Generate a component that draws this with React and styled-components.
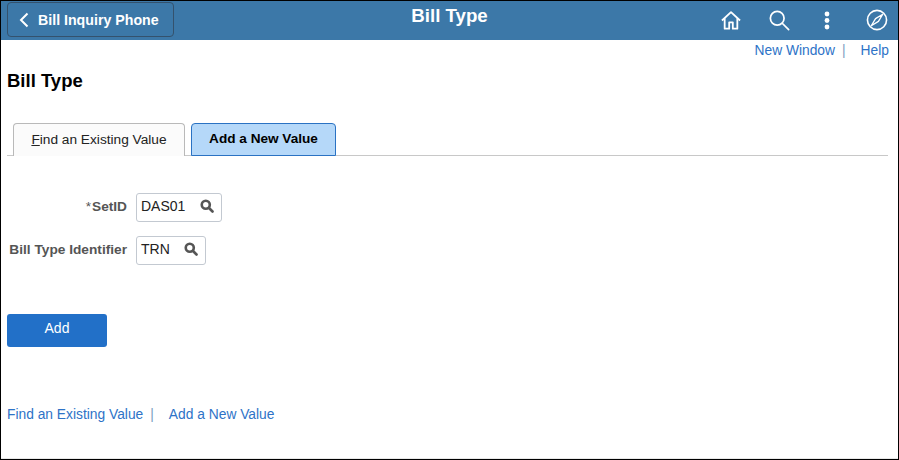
import React from "react";
import styled, { createGlobalStyle } from "styled-components";

const Global = createGlobalStyle`
  html, body { margin: 0; padding: 0; background: #fff; }
  body { font-family: "Liberation Sans", Arial, sans-serif; }
`;
const Frame = styled.div`
  width: 899px; height: 460px; box-sizing: border-box; border: 1px solid #000;
  display: flex; flex-direction: column; overflow: hidden; background: #fff;
  box-shadow: inset 0 -1px 0 #e8e8e8;
`;
const Banner = styled.header`
  height: 38px; flex: none; background: #3c78a8; display: grid;
  grid-template-columns: 1fr auto 1fr; align-items: start; padding: 1px 0 0 6px;
  color: #fff;
`;
const BackButton = styled.button`
  justify-self: start; width: 167px; height: 35px; box-sizing: border-box;
  display: flex; align-items: center; gap: 9px; padding: 0 0 0 11px;
  background: #3c78a8; border: 1px solid #34526d; border-radius: 4px; color: #fff;
  font: bold 14.2px "Liberation Sans", Arial, sans-serif;
`;
const BannerTitle = styled.h1`
  margin: 2px 6px 0 0; font-size: 18.7px; line-height: 24px; font-weight: bold;
`;
const IconBar = styled.nav`
  justify-self: end; display: flex; align-items: center; height: 36px;
`;
const IconSlot = styled.span`
  width: ${p => p.$w || 48}px; margin-left: ${p => p.$ml || 0}px;
  display: flex; justify-content: center; align-items: center;
`;
const Utility = styled.div`
  display: flex; justify-content: flex-end; height: 21px; padding: 3px 9px 0 0; box-sizing: border-box;
  font-size: 13.8px; line-height: 16px;
`;
const Link = styled.a`
  color: #2e73c7; text-decoration: none;
`;
const Pipe = styled.span`
  color: #7d9cc0; margin: ${p => p.$m};
`;
const Content = styled.main`
  padding: 0 10px 0 6px; display: flex; flex-direction: column; flex: 1;
`;
const PageTitle = styled.h2`
  margin: 8px 0 0; font-size: 18.5px; line-height: 24px; font-weight: bold; color: #000;
`;
const Tabs = styled.div`
  display: flex; gap: 6px; margin-top: 30px; padding-left: 6px; height: 32px;
  border-bottom: 1px solid #c8c8c8;
`;
const Tab = styled.div`
  box-sizing: border-box; height: 33px; display: flex; align-items: center; justify-content: center;
  width: ${p => p.$w}px; border-radius: 4px 4px 0 0;
  border: 1px solid ${p => (p.$active ? "#2a72c3" : "#b9b9b9")};
  border-bottom: ${p => (p.$active ? "1px solid #2a72c3" : "none")};
  background: ${p => (p.$active ? "#b5d8f9" : "#fbfbfb")};
  font-weight: ${p => (p.$active ? "bold" : "normal")};
  font-size: ${p => (p.$active ? "13.6px" : "13.7px")};
  color: ${p => (p.$active ? "#000" : "#222")};
  padding-bottom: 2px;
  u { text-underline-offset: 1px; }
`;
const Form = styled.div`
  display: grid; grid-template-columns: 120px auto; column-gap: 9px; row-gap: 14px;
  margin-top: 37px; align-items: center; justify-content: start; justify-items: start;
`;
const Label = styled.label`
  justify-self: end; font-size: 13.7px; font-weight: bold; color: #555; white-space: nowrap;
  margin-bottom: 2px;
`;
const Star = styled.span`
  font-weight: normal; margin-right: 1px;
`;
const Lookup = styled.div`
  box-sizing: border-box; width: ${p => p.$w}px; height: 29px; border: 1px solid #c3c9d1;
  border-radius: 3px; display: flex; align-items: center; justify-content: space-between;
  padding: 0 7px 3px 4px; font-size: 14px; color: #222;
`;
const AddButton = styled.button`
  width: 100px; height: 33px; margin-top: 49px; border: none; border-radius: 3px;
  background: #2270c8; color: #fff; font: 14px "Liberation Sans", Arial, sans-serif;
  padding: 0 0 5px;
`;
const FooterLinks = styled.div`
  margin-top: 60px; font-size: 13.8px; line-height: 16px; display: flex;
`;

const Glass = ({ size = 14, color = "#555", sw = 3 }) => (
  <svg width={size} height={size} viewBox="0 0 16 16" fill="none" stroke={color} strokeWidth={sw} strokeLinecap="round">
    <circle cx="6.6" cy="6.6" r="4.6" />
    <path d="M10.3 10.3 14.3 14.3" />
  </svg>
);

export default function App() {
  return (
    <Frame>
      <Global />
      <Banner>
        <BackButton>
          <svg width="10" height="16" viewBox="0 0 10 16" fill="none" stroke="#fff" strokeWidth="2">
            <path d="M8.5 1.5 2 8l6.5 6.5" />
          </svg>
          Bill Inquiry Phone
        </BackButton>
        <BannerTitle>Bill Type</BannerTitle>
        <IconBar>
          <IconSlot>
            <svg width="20" height="19" viewBox="0 0 22 21" fill="none" stroke="#fff" strokeWidth="2" strokeLinejoin="round">
              <path d="M1 10.5 11 1.2l10 9.3" />
              <path d="M4 8v11.5h5v-7h4v7h5V8" />
            </svg>
          </IconSlot>
          <IconSlot>
            <svg width="21" height="21" viewBox="0 0 23 23" fill="none" stroke="#fff" strokeWidth="1.9" strokeLinecap="round">
              <circle cx="9" cy="9" r="7.5" />
              <path d="M14.5 14.5 21.5 21.5" />
            </svg>
          </IconSlot>
          <IconSlot>
            <svg width="6" height="19" viewBox="0 0 6 19" fill="#fff">
              <circle cx="3" cy="3" r="2.4" />
              <circle cx="3" cy="9.5" r="2.4" />
              <circle cx="3" cy="16" r="2.4" />
            </svg>
          </IconSlot>
          <IconSlot $w={42} $ml={5}>
            <svg width="22" height="22" viewBox="0 0 23 23" fill="none" stroke="#fff" strokeWidth="1.7" strokeLinejoin="round">
              <circle cx="11.5" cy="11.5" r="10" />
              <path d="M17.5 5.5 13 13 5.5 17.5 10 10Z" strokeWidth="1.4" />
            </svg>
          </IconSlot>
        </IconBar>
      </Banner>
      <Utility>
        <Link>New Window</Link>
        <Pipe $m="0 15px 0 7px">|</Pipe>
        <Link>Help</Link>
      </Utility>
      <Content>
        <PageTitle>Bill Type</PageTitle>
        <Tabs>
          <Tab $w={172}><span><u>F</u>ind an Existing Value</span></Tab>
          <Tab $w={145} $active>Add a New Value</Tab>
        </Tabs>
        <Form>
          <Label><Star>*</Star>SetID</Label>
          <Lookup $w={86}>DAS01<Glass /></Lookup>
          <Label>Bill Type Identifier</Label>
          <Lookup $w={70}>TRN<Glass /></Lookup>
        </Form>
        <AddButton>Add</AddButton>
        <FooterLinks>
          <Link>Find an Existing Value</Link>
          <Pipe $m="0 15px 0 7px">|</Pipe>
          <Link>Add a New Value</Link>
        </FooterLinks>
      </Content>
    </Frame>
  );
}
